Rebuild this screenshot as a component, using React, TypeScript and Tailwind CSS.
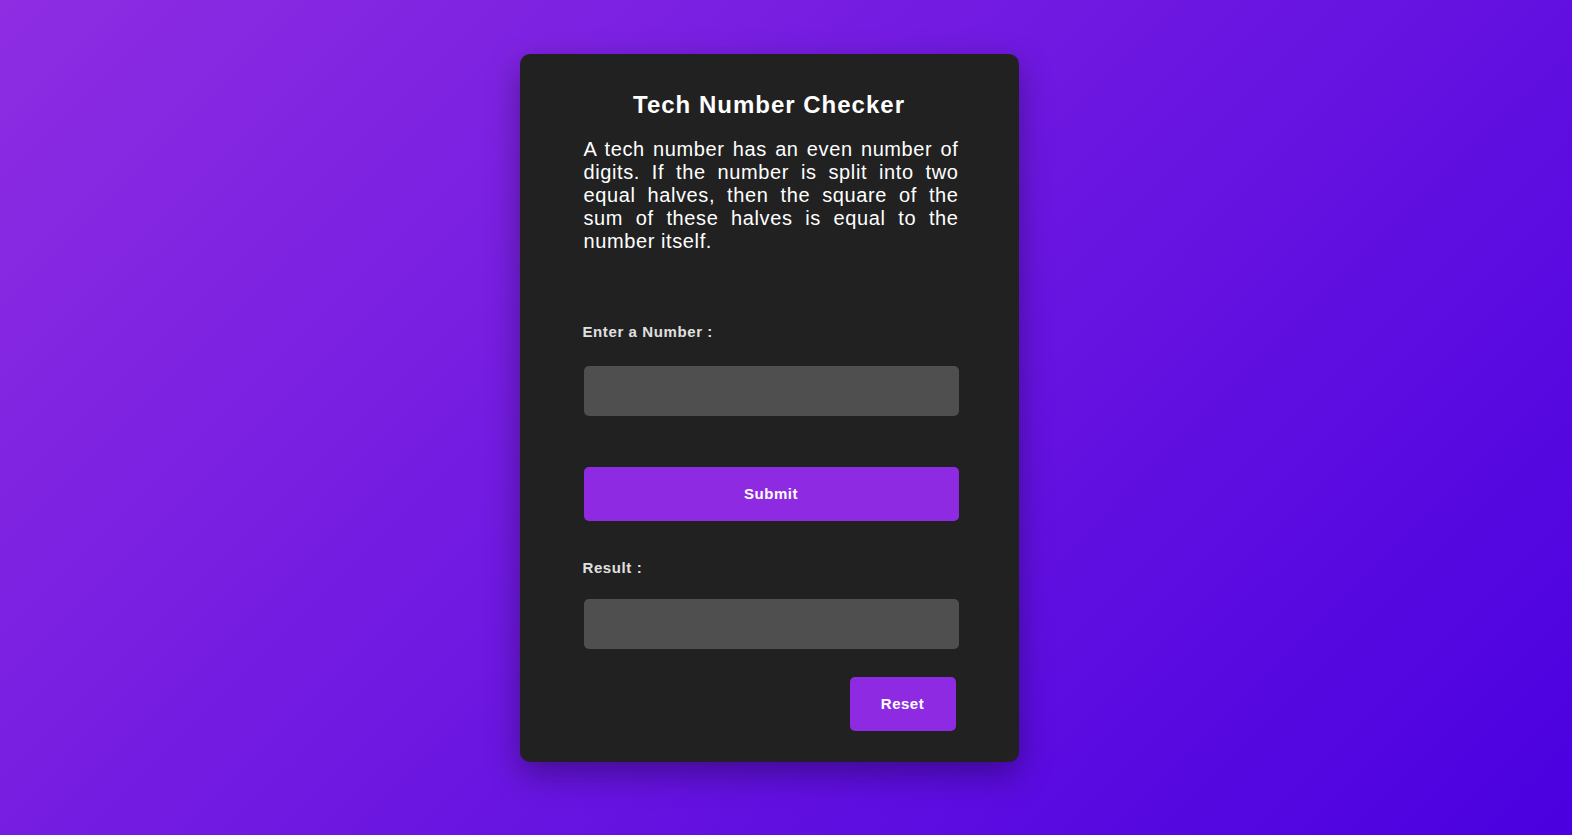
export default function App() {
  return (
    <main className="min-h-screen w-full bg-[linear-gradient(135deg,#8e2de2,#4a00e0)] flex justify-center items-start font-['Liberation_Sans',Arial,sans-serif]">
      <div className="mt-[54px] mr-[34px] w-[499px] rounded-[10px] bg-[#212121] shadow-[0_12px_32px_rgba(0,0,0,0.35)] pt-[37px] pb-[31px] flex flex-col">
        <h2 className="text-center text-white font-bold text-[24px] leading-[28px] tracking-[1px]">
          Tech Number Checker
        </h2>
        <div className="ml-[64px] w-[375px] flex flex-col">
          <p className="mt-[19px] text-white text-[20px] leading-[23px] tracking-[0.6px] text-justify">
            A tech number has an even number of digits. If the number is split
            into two equal halves, then the square of the sum of these halves is
            equal to the number itself.
          </p>

          <label className="mt-[70px] -ml-[1px] text-[#e0e0e0] font-bold text-[15px] leading-[17px] tracking-[0.6px]">
            Enter a Number :
          </label>
          <input
            type="text"
            className="mt-[26px] h-[50px] w-full rounded-[5px] bg-[#4f4f4f] text-white px-3 outline-none"
          />

          <button className="mt-[51px] h-[54px] w-full rounded-[5px] bg-[#8e2be2] text-white font-bold text-[15px] tracking-[0.5px]">
            Submit
          </button>

          <label className="mt-[38px] -ml-[1px] text-[#e0e0e0] font-bold text-[15px] leading-[17px] tracking-[0.6px]">
            Result :
          </label>
          <div className="mt-[23px] h-[50px] w-full rounded-[5px] bg-[#4f4f4f]" />

          <div className="mt-[28px] flex justify-end pr-[3px]">
            <button className="h-[54px] w-[106px] rounded-[5px] bg-[#8e2be2] text-white font-bold text-[15px] tracking-[0.5px]">
              Reset
            </button>
          </div>
        </div>
      </div>
    </main>
  );
}
